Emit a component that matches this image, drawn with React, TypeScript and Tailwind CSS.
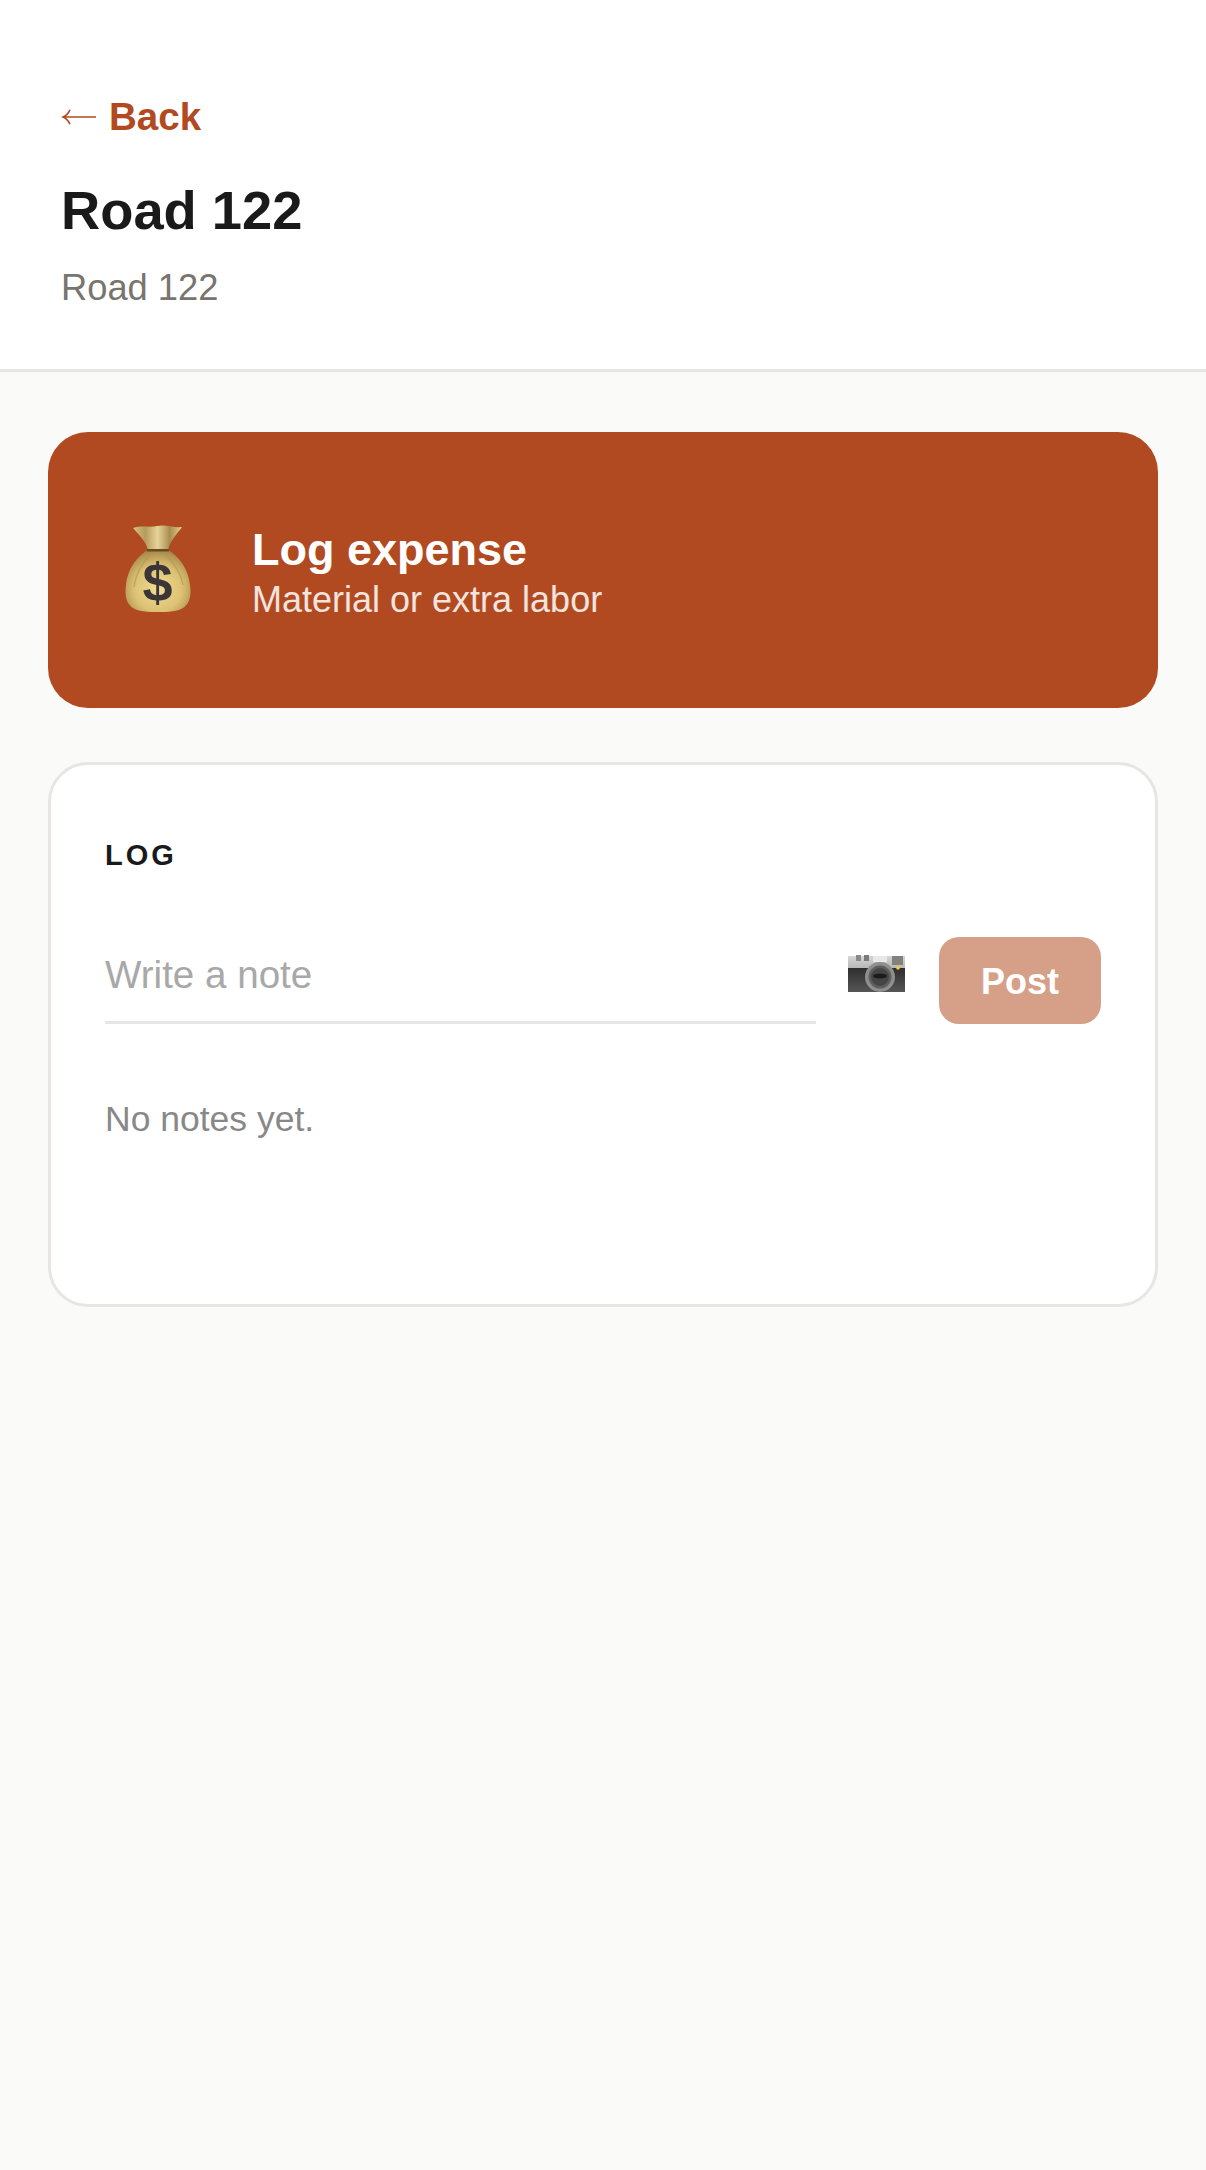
import React from 'react';

const MoneyBag = (): JSX.Element => (
  <svg width="66" height="87" viewBox="0 0 66 87" aria-hidden="true">
    <defs>
      <radialGradient id="bagFill" cx="50%" cy="62%" r="62%">
        <stop offset="0%" stopColor="#f0dd90" />
        <stop offset="60%" stopColor="#dcc173" />
        <stop offset="100%" stopColor="#a5884a" />
      </radialGradient>
      <linearGradient id="neckFill" x1="0" y1="0" x2="1" y2="0">
        <stop offset="0%" stopColor="#d8c284" />
        <stop offset="25%" stopColor="#b59a5c" />
        <stop offset="50%" stopColor="#e6d398" />
        <stop offset="75%" stopColor="#a98d50" />
        <stop offset="100%" stopColor="#e3cf94" />
      </linearGradient>
    </defs>
    <path
      d="M8 3 C17 0 24 3 32 1 C40 -1 48 3 57 2 C52 9 45 16 43 25 L23 25 C21 16 13 9 8 3 Z"
      fill="url(#neckFill)"
    />
    <path
      d="M23 25 L43 25 C50 29 63 40 65 60 C67 74 63 82 54 85 C42 88 24 88 12 85 C3 82 -1 74 1 60 C3 40 16 29 23 25 Z"
      fill="url(#bagFill)"
    />
    <path d="M22 24 L44 24 L44 26.5 L22 26.5 Z" fill="#6a4a22" />
    <path d="M26 29 C18 37 11 47 9 62 M40 29 C48 37 56 47 58 60" fill="none" stroke="#b4954f" strokeWidth="1.5" opacity="0.6" />
    <text
      x="32.5"
      y="76"
      textAnchor="middle"
      fontFamily="'Liberation Sans', sans-serif"
      fontWeight="700"
      fontSize="54"
      fill="#3b3537"
    >
      $
    </text>
  </svg>
);

const Camera = (): JSX.Element => (
  <svg width="57" height="37" viewBox="0 0 57 37" aria-hidden="true">
    <defs>
      <linearGradient id="camTop" x1="0" y1="0" x2="0" y2="1">
        <stop offset="0%" stopColor="#d6d6d6" />
        <stop offset="100%" stopColor="#b5b5b5" />
      </linearGradient>
      <linearGradient id="camBody" x1="0" y1="0" x2="0" y2="1">
        <stop offset="0%" stopColor="#2e2e2e" />
        <stop offset="100%" stopColor="#565656" />
      </linearGradient>
    </defs>
    <rect x="0" y="1" width="57" height="13" fill="url(#camTop)" />
    <rect x="0" y="13" width="57" height="24" fill="url(#camBody)" />
    <rect x="8" y="0" width="5" height="6" fill="#8a8a8a" />
    <rect x="16" y="0" width="5" height="6" fill="#7a7a7a" />
    <rect x="25" y="1" width="14" height="6" fill="#e8e8e8" />
    <rect x="44" y="1" width="11" height="9" fill="#86807a" />
    <circle cx="50" cy="13" r="1.8" fill="#f0cf3a" />
    <circle cx="32" cy="22" r="15" fill="#8e8e8e" />
    <circle cx="32" cy="22" r="11.5" fill="#5e5e5e" />
    <circle cx="32" cy="22" r="9" fill="#454545" />
    <ellipse cx="32" cy="21" rx="7" ry="2.5" fill="#1c1c1c" />
  </svg>
);

const BackArrow = (): JSX.Element => (
  <svg width="35" height="16" viewBox="0 0 35 16" fill="none" stroke="#b14a20" strokeWidth="1.6" aria-hidden="true">
    <path d="M2 8 H35 M9 0.8 C7.5 4 5.5 6.6 2 8 C5.5 9.4 7.5 12 9 15.2" />
  </svg>
);

export default function App(): JSX.Element {
  return (
    <div className="min-h-[2170px] bg-[#fafaf8] font-['Liberation_Sans',Arial,sans-serif]">
      <header className="h-[372px] border-b-[3px] border-[#e7e6e3] bg-white px-[61px] pt-[92px]">
        <a className="flex items-center gap-[13px] text-[38.5px] leading-[50px] font-bold text-[#b14a20]" href="#">
          <BackArrow />
          Back
        </a>
        <h1 className="mt-[36px] text-[54.3px] leading-[66px] font-bold text-[#1a1a1a]">Road 122</h1>
        <p className="mt-[22px] text-[36.3px] leading-[44px] text-[#78746e]">Road 122</p>
      </header>

      <main className="flex flex-col gap-[54px] px-[48px] pt-[60px]">
        <button className="flex h-[276px] items-center rounded-[40px] bg-[#b14a20] pl-[77px] text-left">
          <span className="-mt-[4px] block">
            <MoneyBag />
          </span>
          <span className="mt-[5px] ml-[61px] flex flex-col">
            <span className="text-[45px] leading-[50px] font-bold text-white">Log expense</span>
            <span className="mt-[4px] text-[36px] leading-[42px] text-white/85">Material or extra labor</span>
          </span>
        </button>

        <section className="h-[545px] rounded-[40px] border-[3px] border-[#e7e6e3] bg-white px-[54px] pt-[72px]">
          <h2 className="text-[29px] leading-[36px] font-bold tracking-[3px] text-[#1a1a1a]">LOG</h2>
          <div className="mt-[64px] flex items-start">
            <div className="flex h-[87px] w-[711px] items-center border-b-[3px] border-[#e7e6e3] pb-[8px]">
              <span className="text-[38.6px] leading-[46px] text-[#a8a8a8]">Write a note</span>
            </div>
            <div className="mt-[18px] ml-[32px]">
              <Camera />
            </div>
            <button className="ml-[34px] h-[87px] w-[162px] rounded-[20px] bg-[#d6a088] pt-[2px] text-[36px] font-bold text-white">
              Post
            </button>
          </div>
          <p className="mt-[73px] text-[35.5px] leading-[44px] text-[#888888]">No notes yet.</p>
        </section>
      </main>
    </div>
  );
}
